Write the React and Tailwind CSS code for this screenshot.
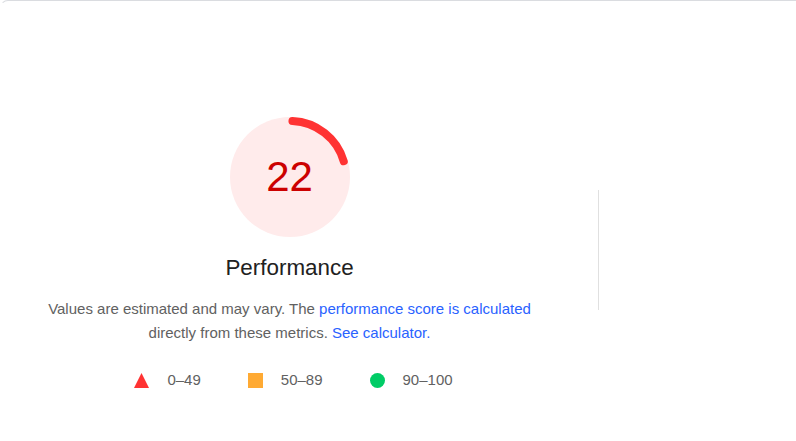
const FONT = { fontFamily: '"Liberation Sans", Arial, sans-serif' };

function Gauge({ score = 22 }) {
  const r = 56;
  const circ = 2 * Math.PI * r;
  const len = (score / 100) * circ - 8;
  return (
    <div className="relative w-[120px] h-[120px]">
      <svg viewBox="0 0 120 120" className="absolute inset-0 w-full h-full">
        <circle cx="60" cy="60" r="60" fill="#ffebeb" />
        <circle
          cx="60"
          cy="60"
          r={r}
          fill="none"
          stroke="#ff3333"
          strokeWidth="8"
          strokeLinecap="round"
          strokeDasharray={`${len} ${circ}`}
          transform="rotate(-87.5 60 60)"
        />
      </svg>
      <div className="absolute inset-0 flex items-center justify-center text-[42px] leading-none text-[#cc0000]">
        {score}
      </div>
    </div>
  );
}

function LegendItem({ shape, label }) {
  return (
    <div className="flex items-center gap-[18px]">
      {shape === 'fail' && (
        <svg width="15" height="15" viewBox="0 0 15 15">
          <polygon points="7.5,0 15,15 0,15" fill="#ff3333" />
        </svg>
      )}
      {shape === 'average' && <span className="block w-[15px] h-[15px] bg-[#ffaa33]" />}
      {shape === 'pass' && <span className="block w-[15px] h-[15px] rounded-full bg-[#00cc66]" />}
      <span className="text-[15px] leading-[20px] text-[#616161]">{label}</span>
    </div>
  );
}

export default function App() {
  return (
    <div
      className="min-h-screen bg-white border-t border-l border-t-[#dadce0] border-l-transparent rounded-tl-[8px]"
      style={FONT}
    >
      <div className="flex items-center pt-[116px]">
        <div className="w-[577px] flex flex-col items-center">
          <Gauge score={22} />
          <div className="mt-[17px] text-[22.4px] leading-[28px] text-[#212121]">Performance</div>
          <p className="mt-[15px] w-[500px] text-center text-[15px] leading-[24px] text-[#616161]">
            Values are estimated and may vary. The{' '}
            <a href="#" className="text-[#2962ff]">performance score is calculated</a>{' '}
            directly from these metrics.{' '}
            <a href="#" className="text-[#2962ff]">See calculator.</a>
          </p>
          <div className="mt-[25px] flex items-center gap-[47px] pl-[8px]">
            <LegendItem shape="fail" label="0–49" />
            <LegendItem shape="average" label="50–89" />
            <LegendItem shape="pass" label="90–100" />
          </div>
        </div>
        <div className="ml-[20px] mb-[8px] w-px h-[120px] bg-[#e0e0e0]" />
      </div>
    </div>
  );
}
